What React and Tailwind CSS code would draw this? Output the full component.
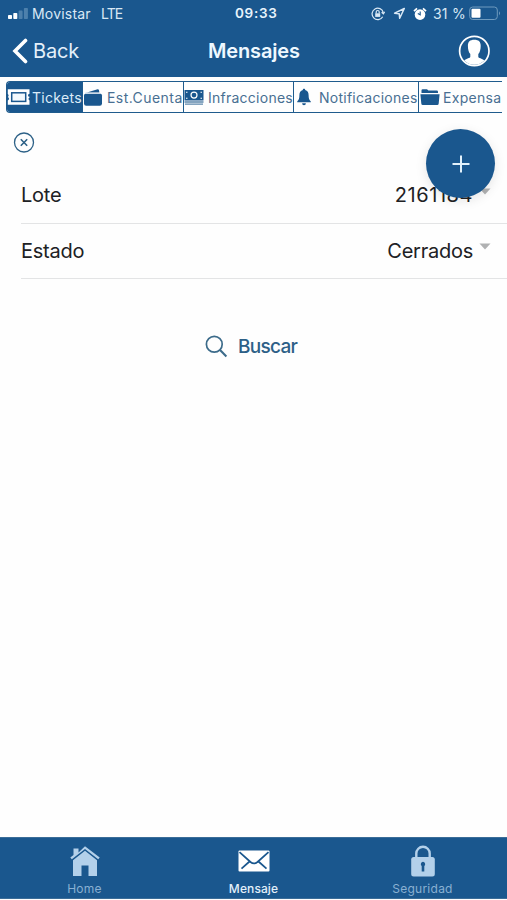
import React, { useState } from "react";

const TicketIcon = () => (
  <svg width="24" height="18" viewBox="0 0 24 18">
    <path
      fill="white"
      d="M.8 1.200h21.700v4.600a1.500 1.500 0 0 0 0 3V9.600a1.500 1.500 0 0 0 0 2.800V16.800H.8v-4.400a1.800 1.800 0 0 0 0-3.400 1.800 1.800 0 0 0 0-3z"
    />
    <rect x="4.700" y="4.800" width="14" height="8.600" fill="#f3f9fd" stroke="#1a578e" strokeWidth="1.500" />
  </svg>
);

const WalletIcon = () => (
  <svg width="20" height="19" viewBox="0 0 20 19" fill="#1a578e">
    <path d="M1.500 5.200 14.600 1.200q1-.2 1.300.8l.5 2.400H5z" />
    <rect x="1" y="5.400" width="18" height="12.400" rx="2.200" />
    <path d="M2.500 5.300h15" stroke="#fff" strokeWidth=".7" />
  </svg>
);

const CashIcon = () => (
  <svg width="20" height="17" viewBox="0 0 20 17">
    <path fill="#1a578e" d="M.5 1h19v10.400H.5z" />
    <circle cx="10" cy="6.100" r="3" fill="none" stroke="#fff" strokeWidth="1.200" />
    <path stroke="#fff" strokeWidth="1.100" d="M2 3.200h1.500M2 9.200h1.500M16.500 3.200H18M16.500 9.200H18" />
    <path stroke="#5c86aa" strokeWidth="1.300" d="M.5 13h19M1 15.200h18" />
  </svg>
);

const BellIcon = () => (
  <svg width="14" height="18" viewBox="0 0 14 18" fill="#1a578e">
    <path d="M7 .8c.8 0 1.200.5 1.200 1.200 2.300.6 3.400 2.400 3.400 5 0 3.700.6 5 2.200 6.500v.8H.2v-.8C1.800 12 2.400 10.700 2.400 7c0-2.600 1.100-4.400 3.400-5C5.800 1.300 6.200.8 7 .8zM5.100 15.300h3.800a1.900 1.900 0 0 1-3.800 0z" />
  </svg>
);

const FolderIcon = () => (
  <svg width="20" height="18" viewBox="0 0 20 18" fill="#1a578e">
    <path d="M1.500 5V2.400q0-1.200 1.200-1.200H7l1.400 1.400h8.400q1.200 0 1.200 1.200V5z" />
    <path d="M.4 6.200h19.200l-.9 9.300q-.1 1.500-1.500 1.500H2.800q-1.400 0-1.500-1.500z" />
  </svg>
);

const tabs = [
  { name: "Tickets", icon: <TicketIcon />, box: "w-[76px]", slot: "w-[25px]", text: "tracking-[0.3px]" },
  { name: "Est.Cuenta", icon: <WalletIcon />, box: "w-[101px]", slot: "w-[24px]", text: "tracking-[0.45px]" },
  { name: "Infracciones", icon: <CashIcon />, box: "w-[110px]", slot: "w-[24px]", text: "tracking-[0.25px]" },
  { name: "Notificaciones", icon: <BellIcon />, box: "w-[125px]", slot: "w-[25px] pl-[3px]", text: "tracking-[0.25px]" },
  { name: "Expensa", icon: <FolderIcon />, box: "w-[84px]", slot: "w-[24px] pl-px", text: "tracking-[0.3px]" },
];

const StatusBar = () => (
  <div className="flex h-[27px] items-center text-[14px] leading-[27px] text-[#d9e8f5]">
    <div className="flex w-[235px] items-center pl-2">
      <svg width="20" height="12" viewBox="0 0 20 12">
        <rect x="0" y="7" width="4" height="4" rx=".8" fill="#fff" />
        <rect x="5.300" y="5" width="4" height="6" rx=".8" fill="#fff" />
        <rect x="10.600" y="2.600" width="4" height="8.400" rx=".8" fill="#4d80ac" />
        <rect x="15.900" y="0" width="4" height="11" rx=".8" fill="#4d80ac" />
      </svg>
      <span className="ml-1 w-[69px] tracking-[0.2px]">Movistar</span>
      <span className="tracking-[-0.9px]">LTE</span>
    </div>
    <span className="w-[136px] text-[13.500px] font-semibold tracking-[0.7px] text-[#e8f4fc]">09:33</span>
    <svg width="14" height="14" viewBox="0 0 14 14" fill="none" stroke="#d9e8f5" strokeWidth="1.200">
      <path d="M12.300 5.500a5.700 5.700 0 1 0-.6 4.300M10.600 5.200l1.800 1.700 1.300-2" />
      <rect x="4.200" y="6.300" width="5" height="3.600" fill="#d9e8f5" stroke="none" />
      <path d="M5.200 6.500V5a1.500 1.500 0 0 1 3 0v1.500" />
    </svg>
    <svg className="ml-2" width="13" height="13" viewBox="0 0 13 13" fill="none" stroke="#d9e8f5" strokeWidth="1.500" strokeLinejoin="round">
      <path d="M11.300 1.500 1.600 6.200l4.600.5.500 4.600z" />
    </svg>
    <svg className="ml-[7px]" width="14" height="14" viewBox="0 0 14 14">
      <circle cx="7" cy="7.600" r="5.300" fill="#fff" />
      <path d="M1 4.200 4 1.300M13 4.200l-3-2.900" stroke="#fff" strokeWidth="1.700" />
      <path d="M7.200 4.500v3.300L4.800 6.500" fill="none" stroke="#1a578e" strokeWidth="1.100" />
    </svg>
    <span className="ml-[6px] w-[36px] whitespace-nowrap text-[14px] tracking-[0.2px]">31 %</span>
    <svg width="33" height="15" viewBox="0 0 33 15">
      <rect x=".7" y="1" width="27.600" height="12.500" rx="3" fill="none" stroke="#6f9bbf" />
      <rect x="2.500" y="2.700" width="9" height="9" rx="1" fill="#fff" />
      <path d="M30 5.300q2 2 0 4z" fill="#6f9bbf" />
    </svg>
  </div>
);

const NavBar = () => (
  <div className="flex h-[50px] items-center pb-[3px] text-white">
    <div className="flex w-[208px] items-center pl-3">
      <svg width="16" height="26" viewBox="0 0 16 26" fill="none" stroke="white" strokeWidth="3.600" strokeLinecap="round">
        <path d="M13.500 2.500 3 13l10.500 10.500" />
      </svg>
      <span className="ml-[5px] text-[20px] tracking-[-0.2px] text-[#e3f0fa]">Back</span>
    </div>
    <h1 className="w-[250px] text-[20px] font-semibold tracking-[-0.15px] text-[#eef8ff]">Mensajes</h1>
    <svg width="32" height="32" viewBox="0 0 32 32">
      <circle cx="16.300" cy="16" r="14.700" fill="#1a578e" stroke="#fff" strokeWidth="1.700" />
      <path
        fill="#fff"
        d="M16.300 4.800c4.400 0 6.400 2 6.400 6 0 3.700-.9 6.800-2.400 8.300v2.700c0 1.400 3.800 1.700 6 3.600A13.600 13.600 0 0 1 6.300 25.400c2.200-1.900 6-2.200 6-3.600v-2.700c-1.500-1.500-2.400-4.600-2.400-8.300 0-4 2-6 6.400-6z"
      />
    </svg>
  </div>
);

const Row = ({ label, value }) => (
  <div className="ml-[21px] flex h-[55.500px] items-center border-b border-[#e3e4e5] pr-4 text-[20px] tracking-[-0.25px] text-[#202124]">
    <span className="flex-1">{label}</span>
    {value}
    <svg className="mb-2 ml-[6px]" width="12" height="7" viewBox="0 0 12 7">
      <path d="M.5.500h11L6 6.500z" fill="#b0b1b2" />
    </svg>
  </div>
);

const HomeIcon = () => (
  <svg width="32" height="32" viewBox="0 0 32 32" fill="#b3d0ea">
    <path d="M4.500 3.500h5v4L16 1.200l14.700 11.300-1.500 1.700L16 4 2.800 14.200l-1.500-1.700 3.200-2.500z" />
    <path d="M4 15.200 16 5.700l12 9.500V31h-8.500V20.500h-7V31H4z" />
  </svg>
);

const MailIcon = () => (
  <svg width="32" height="22" viewBox="0 0 32 22">
    <rect x=".5" y=".5" width="31" height="21" rx="1" fill="#fff" />
    <path
      d="M1.500 2.200 12.500 12q3.500 2.800 7 0L30.500 2.200M11.500 11.500 3.500 18.700M20.500 11.500l8 7.200"
      fill="none"
      stroke="#1a578e"
      strokeWidth="1.700"
    />
  </svg>
);

const LockIcon = () => (
  <svg width="26" height="32" viewBox="0 0 26 32" fill="#b3d0ea">
    <path d="M6.300 13V8.500a6.700 6.700 0 0 1 13.400 0V13" fill="none" stroke="#b3d0ea" strokeWidth="2.400" />
    <rect x="1.200" y="12" width="23.600" height="19.500" rx="2.500" />
    <path d="M13 16.800a2.300 2.300 0 0 1 1.300 4.100V26.500h-2.600v-5.600a2.300 2.300 0 0 1 1.300-4.100z" fill="#1a578e" />
  </svg>
);

const App = () => {
  const [active, setActive] = useState("Tickets");

  return (
    <div className="relative flex h-[900px] w-[507px] flex-col overflow-hidden bg-[#fefefe] font-['Inter',sans-serif]">
      <header className="bg-[#1a578e]">
        <StatusBar />
        <NavBar />
      </header>

      <nav className="ml-[6px] mt-1 flex h-8 w-[496px] overflow-hidden rounded-l-[4px] border-y border-l border-[#1f5b8d]">
        {tabs.map((tab) => (
          <button
            key={tab.name}
            onClick={() => setActive(tab.name)}
            className={`flex shrink-0 items-center border-r border-[#1f5b8d] text-[14px] ${tab.box} ${
              active === tab.name ? "bg-[#1a578e] text-[#dcecf9]" : "text-[#486f92]"
            }`}
          >
            <span className={`flex shrink-0 ${tab.slot}`}>{tab.icon}</span>
            <span className={tab.text}>{tab.name}</span>
          </button>
        ))}
      </nav>

      <main className="flex-1">
        <button className="ml-[13px] mt-[18px] block">
          <svg width="22" height="22" viewBox="0 0 22 22" fill="none" stroke="#2d6187">
            <circle cx="11" cy="11.500" r="9.500" strokeWidth="1.300" />
            <path d="m7.800 8.300 6.400 6.400m0-6.400-6.400 6.400" strokeWidth="1.600" />
          </svg>
        </button>

        <div className="mt-[15px]">
          <Row label="Lote" value={<span className="tracking-[0.55px]">2161184</span>} />
          <Row label="Estado" value={<span>Cerrados</span>} />
        </div>

        <button className="ml-[205px] mt-[54px] flex items-center text-[#2d6087]">
          <svg className="mb-[2px]" width="23" height="23" viewBox="0 0 23 23" fill="none" stroke="#3c6b8a" strokeWidth="1.700">
            <circle cx="9.300" cy="9.300" r="7.900" />
            <path d="m14.800 14.800 6.600 6.600" strokeWidth="2.100" />
          </svg>
          <span className="ml-[10px] text-[19px] font-medium tracking-[-0.7px]">Buscar</span>
        </button>
      </main>

      {/* floating add button */}
      <button className="absolute left-[426px] top-[129px] flex size-[69px] items-center justify-center rounded-full bg-[#1a578e] shadow-[0_3px_12px_rgba(0,0,0,0.1)]">
        <svg width="18" height="18" viewBox="0 0 18 18" stroke="#e2f1fb" strokeWidth="2">
          <path d="M9 .5v17M.5 9h17" />
        </svg>
      </button>

      <footer className="mb-[1px] grid h-[62px] grid-cols-3 border-b border-t border-[#3b6d98] bg-[#1a578e] text-[12px] tracking-[0.25px] text-[#89b0d2]">
        <div className="flex flex-col items-center pt-[7px]">
          <HomeIcon />
          <span className="mt-[3px] leading-[18px]">Home</span>
        </div>
        <div className="flex flex-col items-center pt-3 text-[#e3f0fa]">
          <MailIcon />
          <span className="mt-2 font-medium leading-[18px] tracking-[0.1px]">Mensaje</span>
        </div>
        <div className="flex flex-col items-center pt-[7px]">
          <LockIcon />
          <span className="mt-[3px] leading-[18px]">Seguridad</span>
        </div>
      </footer>
    </div>
  );
};

export default App;
